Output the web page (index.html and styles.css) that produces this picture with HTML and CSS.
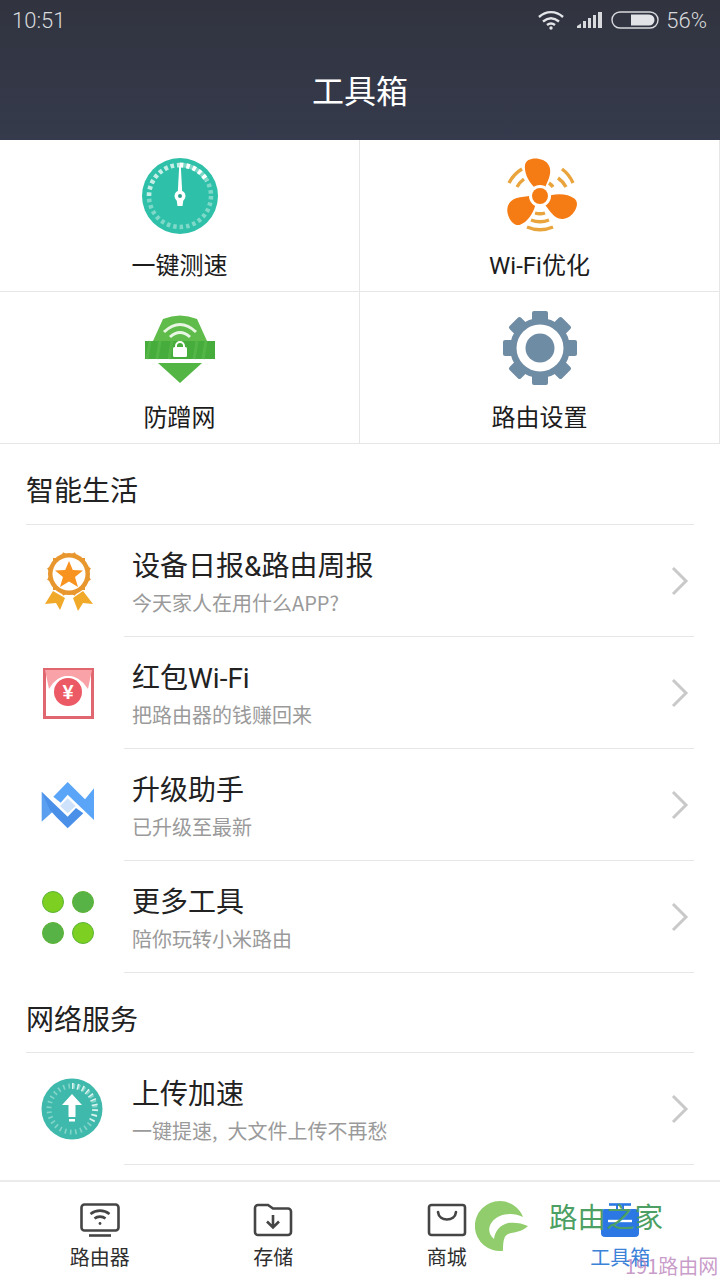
FILE: index.html
```html
<!DOCTYPE html>
<html lang="zh-CN">
<head>
    <meta charset="UTF-8">
    <meta name="viewport" content="width=device-width, initial-scale=1.0">
    <title>工具箱</title>
    <link rel="stylesheet" href="styles.css">
</head>
<body>
<div class="phone">

    <header class="top">
        <div class="status">
            <span class="time">10:51</span>
            <div class="status-right">
                <svg class="ic-wifi" width="28" height="20" viewBox="0 0 28 20" fill="none" stroke="#e4e5e8" stroke-width="2.4">
                    <path d="M2 7C9 0.500 19 0.500 26 7"/>
                    <path d="M6 11.500C11 7.500 17 7.500 22 11.500"/>
                    <path d="M10 15C12.500 13 15.500 13 18 15"/>
                    <circle cx="14" cy="18" r="1.700" fill="#e4e5e8" stroke="none"/>
                </svg>
                <svg class="ic-signal" width="26" height="18" viewBox="0 0 26 18" fill="#d8d9dc">
                    <path d="M0 15l4-2.500V17H0z"/>
                    <rect x="6" y="10" width="3" height="7"/>
                    <rect x="11" y="7" width="3" height="10"/>
                    <rect x="16" y="4" width="3" height="13"/>
                    <rect x="21" y="1" width="4" height="16"/>
                </svg>
                <svg class="ic-batt" width="48" height="18" viewBox="0 0 48 18">
                    <rect x="1" y="1" width="46" height="16" rx="8" fill="none" stroke="#d8d9dc" stroke-width="1.400"/>
                    <path d="M20 3.500H38a5.500 5.500 0 0 1 0 11H20z" fill="#e2e3e6"/>
                </svg>
                <span class="batt-text">56%</span>
            </div>
        </div>
        <h1 class="title">工具箱</h1>
    </header>

    <main class="content">
        <section class="grid">
            <div class="cell">
                <svg width="78" height="78" viewBox="-39 -39 78 78">
                    <circle r="38" fill="#2fc0a9"/>
                    <circle r="31" fill="none" stroke="#7fd9c9" stroke-width="4.500" stroke-dasharray="3.500 3"/>
                    <path d="M0 -31A31 31 0 0 1 27 -15" fill="none" stroke="#fff" stroke-width="5" stroke-dasharray="3.500 3"/>
                    <path d="M-31 0A31 31 0 0 1 0 -31" fill="none" stroke="#c5eee6" stroke-width="4.500" stroke-dasharray="3.500 3"/>
                    <path d="M-0.800 -30h1.600l1.400 26h-4.400z" fill="#fff"/>
                    <path d="M-3.500 3h7l-1 7h-5z" fill="#fff"/>
                    <circle r="5.500" fill="#fff"/>
                    <circle r="2" fill="#2fa08f"/>
                </svg>
                <span class="cell-label">一键测速</span>
            </div>
            <div class="cell">
                <svg width="78" height="78" viewBox="-39 -39 78 78">
                    <g fill="none" stroke="#e9a43c" stroke-width="3.400">
                        <path d="M-31 -13A34 34 0 0 1 -18 -27"/>
                        <path d="M-23 -9A25 25 0 0 1 -16 -17"/>
                        <path d="M33 -13A34 34 0 0 0 22 -27"/>
                        <path d="M26 -9A25 25 0 0 0 18 -18"/>
                        <path d="M13 -9A16 16 0 0 0 9 -13"/>
                        <path d="M-13 31A33 33 0 0 0 13 31"/>
                        <path d="M-9 24A25 25 0 0 0 9 24"/>
                        <path d="M-5 17A16 16 0 0 0 5 17"/>
                    </g>
                    <g fill="#f57c14">
                        <path d="M-6 -9C-12-15-16-24-15-31C-14-38-4-39 3-36C9-33 11-28 10-22C9-16 6-12 5-8Z"/>
                        <path d="M-6 -9C-12-15-16-24-15-31C-14-38-4-39 3-36C9-33 11-28 10-22C9-16 6-12 5-8Z" transform="rotate(120)"/>
                        <path d="M-6 -9C-12-15-16-24-15-31C-14-38-4-39 3-36C9-33 11-28 10-22C9-16 6-12 5-8Z" transform="rotate(240)"/>
                    </g>
                    <circle r="11" fill="#fff"/>
                    <circle r="8" fill="#f57c14"/>
                </svg>
                <span class="cell-label">Wi-Fi优化</span>
            </div>
            <div class="cell">
                <svg width="78" height="78" viewBox="141 308 78 78">
                    <path d="M163 318Q180 311 197 318L207 340H153Z" fill="#5fbb4a"/>
                    <rect x="145" y="340" width="70" height="18" fill="#46ac3c"/>
                    <path d="M150 340l-3 18M160 340l-3 18M172 340l-3 18M197 340l-3 18M206 340l-3 18" stroke="#55b648" stroke-width="3"/>
                    <path d="M158 362H202L180 382Z" fill="#52b544"/>
                    <path d="M164 331Q180 316 196 331" fill="none" stroke="#e8f6e3" stroke-width="3"/>
                    <path d="M170 336Q180 327 190 336" fill="none" stroke="#e8f6e3" stroke-width="3"/>
                    <rect x="173" y="346" width="14" height="10" rx="1.500" fill="#fff"/>
                    <path d="M176 347v-2a4 4 0 0 1 8 0v2" fill="none" stroke="#fff" stroke-width="2"/>
                </svg>
                <span class="cell-label">防蹭网</span>
            </div>
            <div class="cell">
                <svg width="78" height="78" viewBox="-39 -39 78 78">
                    <g fill="#6f8ca5">
                        <rect x="-8" y="-37" width="16" height="74" rx="2"/>
                        <rect x="-8" y="-37" width="16" height="74" rx="2" transform="rotate(45)"/>
                        <rect x="-8" y="-37" width="16" height="74" rx="2" transform="rotate(90)"/>
                        <rect x="-8" y="-37" width="16" height="74" rx="2" transform="rotate(135)"/>
                        <circle r="30"/>
                    </g>
                    <circle r="23.500" fill="#fff"/>
                    <circle r="14.500" fill="#6f8ca5"/>
                </svg>
                <span class="cell-label">路由设置</span>
            </div>
        </section>

        <h2 class="section-title">智能生活</h2>
        <ul class="list">
            <li class="row">
                <div class="row-icon">
                    <svg width="56" height="88" viewBox="40 536 56 88">
                        <path d="M53 590L65 597 60 609 56 602 45 603ZM83 590L73 597 78 610 83 602 93 603Z" fill="#f0a928"/>
                        <g fill="#e8962e">
                            <circle cx="69" cy="573" r="21"/>
                            <rect x="53" y="557" width="32" height="32"/>
                            <rect x="53" y="557" width="32" height="32" transform="rotate(30 69 573)"/>
                            <rect x="53" y="557" width="32" height="32" transform="rotate(60 69 573)"/>
                        </g>
                        <circle cx="69" cy="573" r="16.500" fill="#fff"/>
                        <path d="M69 560L72.800 569 83 569.500 75 576 78 586 69 580.500 60 586 63 576 55 569.500 65.200 569Z" fill="#f7931e"/>
                    </svg>
                </div>
                <div class="row-text">
                    <div class="row-title">设备日报&amp;路由周报</div>
                    <div class="row-sub">今天家人在用什么APP?</div>
                </div>
                <svg class="chev" width="18" height="30" viewBox="0 0 18 30"><path d="M2 2L15 15 2 28" fill="none" stroke="#c9c9c9" stroke-width="3"/></svg>
            </li>
            <li class="row">
                <div class="row-icon">
                    <svg width="56" height="56" viewBox="40 665 56 56">
                        <rect x="44.500" y="669.500" width="48" height="48" fill="#fff" stroke="#e0666f" stroke-width="3"/>
                        <path d="M45 670H92L88 689Q80 676 68 676 56 676 49 689Z" fill="#f9a3a8"/>
                        <circle cx="68" cy="692" r="16" fill="#fff"/>
                        <circle cx="68" cy="692" r="14" fill="#ec5a66"/>
                        <text x="68" y="699" class="yen">¥</text>
                    </svg>
                </div>
                <div class="row-text">
                    <div class="row-title">红包Wi-Fi</div>
                    <div class="row-sub">把路由器的钱赚回来</div>
                </div>
                <svg class="chev" width="18" height="30" viewBox="0 0 18 30"><path d="M2 2L15 15 2 28" fill="none" stroke="#c9c9c9" stroke-width="3"/></svg>
            </li>
            <li class="row">
                <div class="row-icon">
                    <svg width="56" height="50" viewBox="60 60 168 150">
                        <path d="M65 95V185L108 146Z" fill="#5a9ff0"/>
                        <path d="M65 95L143 170 168 144 190 160 143 205 108 170 90 150Z" fill="#4a90e8"/>
                        <path d="M100 110L143 66 195 118 222 85V180L143 104 122 128Z" fill="#5aa5f7"/>
                        <path d="M143 115L167 138 143 160 120 138Z" fill="#cfe2fb"/>
                    </svg>
                </div>
                <div class="row-text">
                    <div class="row-title">升级助手</div>
                    <div class="row-sub">已升级至最新</div>
                </div>
                <svg class="chev" width="18" height="30" viewBox="0 0 18 30"><path d="M2 2L15 15 2 28" fill="none" stroke="#c9c9c9" stroke-width="3"/></svg>
            </li>
            <li class="row">
                <div class="row-icon">
                    <svg width="56" height="56" viewBox="40 889 56 56">
                        <circle cx="53" cy="902" r="10.500" fill="#7dd021" stroke="#5cb334"/>
                        <circle cx="83" cy="902" r="10.500" fill="#57b346" stroke="#5cb334"/>
                        <circle cx="53" cy="933" r="10.500" fill="#57b346" stroke="#5cb334"/>
                        <circle cx="83" cy="933" r="10.500" fill="#7dd021" stroke="#5cb334"/>
                    </svg>
                </div>
                <div class="row-text">
                    <div class="row-title">更多工具</div>
                    <div class="row-sub">陪你玩转小米路由</div>
                </div>
                <svg class="chev" width="18" height="30" viewBox="0 0 18 30"><path d="M2 2L15 15 2 28" fill="none" stroke="#c9c9c9" stroke-width="3"/></svg>
            </li>
        </ul>

        <h2 class="section-title section-title-tight">网络服务</h2>
        <ul class="list">
            <li class="row">
                <div class="row-icon">
                    <svg width="64" height="64" viewBox="-32 -32 64 64">
                        <circle r="30.500" fill="#3fb9ab"/>
                        <circle r="23" fill="none" stroke="#83d4c9" stroke-width="5" stroke-dasharray="1.600 3.600"/>
                        <path d="M0 -23A23 23 0 0 1 19 13" fill="none" stroke="#d9f3ef" stroke-width="6" stroke-dasharray="1.600 3.600"/>
                        <path d="M0 -15L10 -4H3.500V8H-3.500V-4H-10Z" fill="#fff"/>
                        <rect x="-3" y="10" width="6" height="2.500" fill="#fff"/>
                    </svg>
                </div>
                <div class="row-text">
                    <div class="row-title">上传加速</div>
                    <div class="row-sub">一键提速,&ensp;大文件上传不再愁</div>
                </div>
                <svg class="chev" width="18" height="30" viewBox="0 0 18 30"><path d="M2 2L15 15 2 28" fill="none" stroke="#c9c9c9" stroke-width="3"/></svg>
            </li>
        </ul>
    </main>

    <nav class="tabs">
        <div class="tab">
            <svg width="40" height="34" viewBox="0 0 40 34" fill="none" stroke="#454545" stroke-width="2.600">
                <rect x="1.500" y="1.500" width="37" height="26" rx="3"/>
                <path d="M10.500 11C16 6.500 24 6.500 29.500 11"/>
                <path d="M14.500 15.500C17.500 13 22.500 13 25.500 15.500"/>
                <circle cx="20" cy="20.500" r="1.400" fill="#454545" stroke="none"/>
                <path d="M9 32.500H31"/>
            </svg>
            <span class="tab-label">路由器</span>
        </div>
        <div class="tab">
            <svg width="40" height="34" viewBox="0 0 40 34" fill="none" stroke="#454545" stroke-width="2.600">
                <path d="M2 5A3 3 0 0 1 5 2H15L20 5.500H35A3 3 0 0 1 38 8.500V29A3 3 0 0 1 35 32H5A3 3 0 0 1 2 29Z"/>
                <path d="M20 12V24M14 18.500L20 24.500 26 18.500"/>
            </svg>
            <span class="tab-label">存储</span>
        </div>
        <div class="tab">
            <svg width="40" height="34" viewBox="0 0 40 34" fill="none" stroke="#454545" stroke-width="2.600">
                <rect x="2" y="2" width="36" height="30" rx="2.500"/>
                <path d="M11 9C12 19 28 19 29 9" stroke-linecap="round"/>
            </svg>
            <span class="tab-label">商城</span>
        </div>
        <div class="tab tab-active">
            <svg width="40" height="34" viewBox="0 0 40 34">
                <path d="M9 1.500H31" stroke="#2b78e4" stroke-width="2.600"/>
                <path d="M17 2V7M23 2V7" stroke="#2b78e4" stroke-width="2"/>
                <rect x="1" y="6" width="38" height="28" rx="4" fill="#2b78e4"/>
                <path d="M8 18H32" stroke="#fff" stroke-width="2.400"/>
            </svg>
            <span class="tab-label">工具箱</span>
        </div>
    </nav>

    <!-- watermarks over the tab bar -->
    <svg class="wm-logo" width="54" height="50" viewBox="0 0 54 50">
        <path d="M25 0A25 25 0 0 1 48 16C38 11 24 12 17 21 13 26 13 33 19 38 20 30 25 24 33 22 39 21 47 22 53 25 47 31 39 31 33 33 29 35 28 40 28 49.800A25 25 0 1 1 25 0Z" fill="#92cd6d"/>
    </svg>
    <span class="wm-text">路由之家</span>
    <span class="wm-site">191路由网</span>
</div>
</body>
</html>
```

FILE: styles.css
```css
* {
    box-sizing: border-box;
}

html, body {
    margin: 0;
    padding: 0;
}

body {
    font-family: "Noto Sans CJK SC", "Roboto", sans-serif;
    background-color: #fff;
    color: #1a1a1a;
}

.phone {
    position: relative;
    width: 720px;
    height: 1280px;
    display: flex;
    flex-direction: column;
    overflow: hidden;
}

.top {
    height: 140px;
    flex: none;
    background: linear-gradient(#31343f, #353a4c);
    color: #fff;
}

.status {
    height: 40px;
    padding: 0 13px 0 12px;
    display: flex;
    align-items: center;
    justify-content: space-between;
    color: #d8d9dc;
    font-family: "Roboto", sans-serif;
    font-weight: 300;
    font-size: 22px;
}

.status-right {
    display: flex;
    align-items: center;
}

.ic-wifi {
    margin-right: 12px;
}

.ic-signal {
    margin-right: 8px;
}

.ic-batt {
    margin-right: 7px;
}

.title {
    margin: 0;
    height: 100px;
    line-height: 98px;
    text-align: center;
    font-size: 32px;
    font-weight: 400;
}

.content {
    flex: 1;
    min-height: 0;
    overflow: hidden;
}

.grid {
    display: grid;
    grid-template-columns: 360px 360px;
    grid-auto-rows: 152px;
}

.cell {
    display: flex;
    flex-direction: column;
    align-items: center;
    padding-top: 17px;
    border-right: 1px solid #e6e6e6;
    border-bottom: 1px solid #e6e6e6;
}

.cell-label {
    font-family: "Roboto", "Noto Sans CJK SC", sans-serif;
    font-size: 24px;
    line-height: 34px;
    margin-top: 14px;
    color: #1c1c1c;
}

.section-title {
    margin: 0 26px;
    height: 81px;
    line-height: 90px;
    font-size: 28px;
    font-weight: 400;
    color: #222;
    border-bottom: 1px solid #e6e6e6;
}

.section-title-tight {
    height: 80px;
}

.list {
    list-style: none;
    margin: 0;
    padding: 0;
}

.row {
    height: 112px;
    display: flex;
    align-items: center;
    margin-right: 26px;
    position: relative;
}

.row::after {
    content: "";
    position: absolute;
    left: 124px;
    right: 0;
    bottom: 0;
    height: 1px;
    background-color: #e6e6e6;
}

.row-icon {
    width: 132px;
    flex: none;
    padding-left: 40px;
    display: flex;
}

.row-text {
    flex: 1;
}

.row-title {
    font-family: "Roboto", "Noto Sans CJK SC", sans-serif;
    font-size: 28px;
    line-height: 40px;
    padding-top: 3px;
    color: #222;
}

.row-sub {
    font-size: 20px;
    line-height: 30px;
    margin-top: 1px;
    color: #9a9a9a;
}

.chev {
    margin-right: 5px;
}

.yen {
    font-family: "Liberation Sans", sans-serif;
    font-size: 20px;
    font-weight: 700;
    fill: #fff;
    text-anchor: middle;
}

.tabs {
    height: 100px;
    flex: none;
    background-color: #fff;
    border-top: 2px solid #ebebeb;
    padding: 21px 13px 0;
    display: flex;
}

.tab {
    flex: 1;
    display: flex;
    flex-direction: column;
    align-items: center;
}

.tab-label {
    font-size: 20px;
    line-height: 28px;
    margin-top: 6px;
    color: #2e2e2e;
}

.tab-active .tab-label {
    color: #3b82d9;
}

/* watermarks */
.wm-logo {
    position: absolute;
    left: 475px;
    top: 1201px;
}

.wm-text {
    position: absolute;
    left: 549px;
    top: 1195px;
    font-size: 28.500px;
    line-height: 42px;
    color: #4d9f63;
}

.wm-site {
    position: absolute;
    left: 625px;
    top: 1252px;
    font-size: 20px;
    line-height: 28px;
    color: rgba(186, 130, 186, 0.8);
}
```
